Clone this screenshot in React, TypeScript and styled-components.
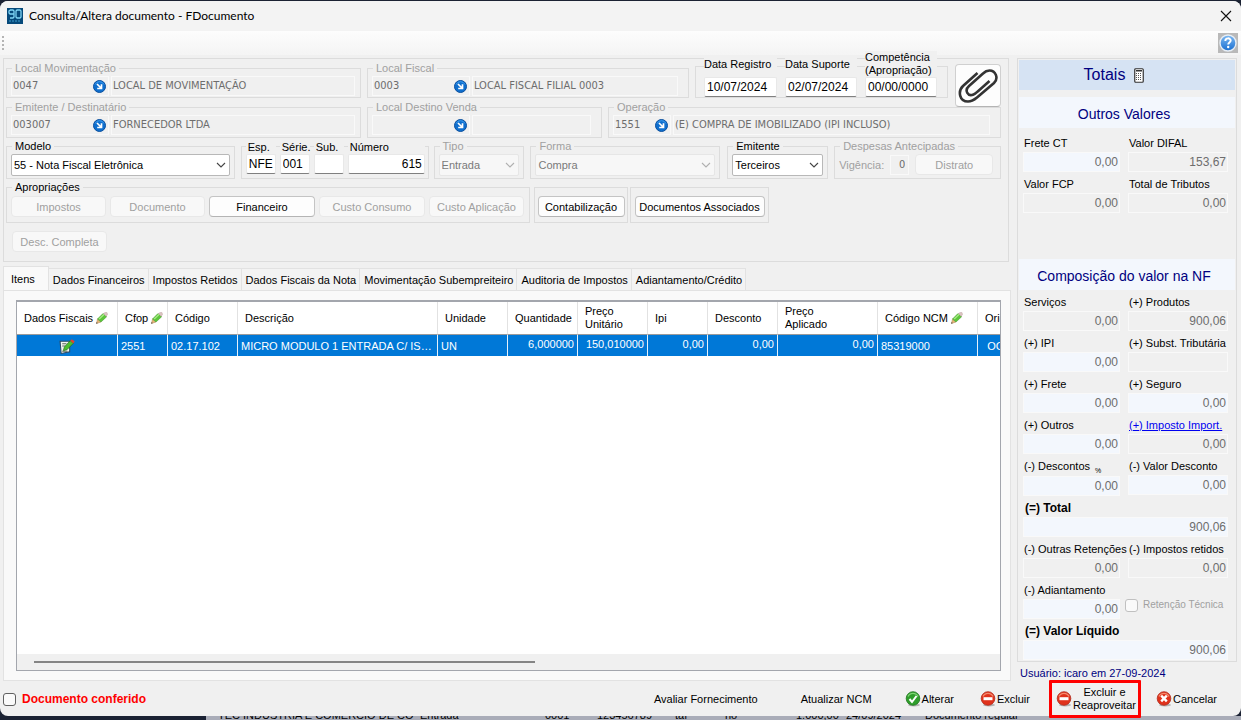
import React, { useId } from "react";
import styled, { createGlobalStyle, css } from "styled-components";

const ui = '"Liberation Sans", Arial, sans-serif';
const dataFont = '"DejaVu Sans Condensed", Tahoma, sans-serif';
const face = "#f0f0f0";
const line = "#dcdcdc";
const navy = "#000080";

const GlobalStyle = createGlobalStyle`
  *, *::before, *::after { box-sizing: border-box; }
  body { margin: 0; background: #1b2233; font-family: ${ui}; font-size: 11px; line-height: 14px; color: #000; }
  input, select, button { font: inherit; color: inherit; margin: 0; }
`;

const Desktop = styled.div`
  display: flex;
  flex-direction: column;
  min-height: 100vh;
  padding-top: 1px;
`;

const Dialog = styled.main`
  position: relative;
  z-index: 1;
  flex: 1;
  display: flex;
  flex-direction: column;
  background: ${face};
  border-radius: 8px;
`;

const TitleBar = styled.header`
  display: flex;
  align-items: center;
  gap: 6px;
  height: 30px;
  padding: 0 9px 0 7px;
  background: #f3f3f3;
  border-radius: 8px 8px 0 0;
`;

const Title = styled.h1`
  flex: 1;
  margin: 0;
  font: 400 12px/16px Lato, "Segoe UI", sans-serif;
`;

const PlainButton = styled.button`
  display: inline-flex;
  align-items: center;
  justify-content: center;
  padding: 0;
  border: 0;
  background: none;
`;

const ToolStrip = styled.div`
  display: flex;
  align-items: center;
  justify-content: space-between;
  height: 24px;
  padding: 0 3px 0 2px;
  background: linear-gradient(#fdfdfd, #f4f4f4);
`;

const HelpButton = styled(PlainButton)`
  width: 20px;
  height: 20px;
  background: #b9b9b9;
`;

const Body = styled.div`
  flex: 1;
  display: flex;
  gap: 6px;
  padding: 3px 4px 0 3px;
`;

const Work = styled.div`
  flex: 1;
  min-width: 0;
  display: flex;
  flex-direction: column;
  gap: 4px;
`;

const HeaderPanel = styled.section`
  display: flex;
  flex-direction: column;
  margin-right: 2px;
  padding: 2px 7px 9px 2px;
  border: 1px solid ${line};
`;

const FormRow = styled.div<{ $top?: number }>`
  display: flex;
  align-items: flex-end;
  margin-top: ${(p) => p.$top ?? 0}px;
`;

const ExtraRow = styled(FormRow)`
  padding-left: 6px;
`;

interface BoxProps { $w: number; $gap?: number; $grow?: boolean }

const boxSize = css<BoxProps>`
  flex: ${(p) => (p.$grow ? 1 : 0)} 1 ${(p) => p.$w}px;
  min-width: 0;
  margin: 0 ${(p) => p.$gap ?? 6}px 0 0;
  border: 1px solid ${line};
`;

const Fieldset = styled.fieldset<BoxProps & { $h: number; $muted?: boolean }>`
  ${boxSize}
  height: ${(p) => p.$h}px;
  padding: 0 4px;
  color: ${(p) => (p.$muted ? "#a0a0a0" : "#000")};
`;

const Legend = styled.legend`
  margin-left: 1px;
  padding: 0 3px;
  line-height: 14px;
`;

const Inline = styled.div<{ $gap?: number; $top?: number }>`
  display: flex;
  align-items: center;
  gap: ${(p) => p.$gap ?? 2}px;
  padding-top: ${(p) => p.$top ?? 1}px;
`;

const Group = styled.div<BoxProps & { $h: number }>`
  ${boxSize}
  display: flex;
  align-items: flex-end;
  height: ${(p) => p.$h}px;
`;

const ButtonGroup = styled(Group)`
  justify-content: center;
  padding-bottom: 5px;
`;

const Column = styled.div<{ $w: number }>`
  display: flex;
  flex-direction: column;
  width: ${(p) => p.$w}px;
`;

const ColumnLabel = styled.label`
  position: relative;
  padding-left: 2px;
  background: ${face};
  line-height: 13px;
  white-space: nowrap;
`;

const SunkenInput = styled.input<{ $right?: boolean }>`
  width: 100%;
  height: 20px;
  padding: 0 2px;
  border: 1px solid #e8e8e8;
  border-bottom-color: #808080;
  border-radius: 2px;
  background: #fff;
  font-size: 12px;
  text-align: ${(p) => (p.$right ? "right" : "left")};
`;

const FlatField = styled.div<{ $w?: number }>`
  display: flex;
  align-items: center;
  flex: ${(p) => (p.$w ? `0 0 ${p.$w}px` : "1 1 0")};
  min-width: 0;
  height: 20px;
  padding-right: 2px;
  border: 1px solid #f9f9f9;
`;

const FlatInput = styled.input<{ $right?: boolean }>`
  flex: 1;
  min-width: 0;
  width: 0;
  padding: 0 1px;
  border: 0;
  background: none;
  font: 11px/14px ${dataFont};
  color: #6d6d6d;
  text-align: ${(p) => (p.$right ? "right" : "left")};
`;

const SelectWrap = styled.div<{ $muted?: boolean }>`
  position: relative;
  flex: 1;
  color: ${(p) => (p.$muted ? "#7a7a7a" : "#000")};
  svg { position: absolute; right: 4px; top: 8px; pointer-events: none; }
`;

const Select = styled.select`
  display: block;
  width: 100%;
  height: 22px;
  padding: 0 16px 0 2px;
  border: 1px solid #b8b8b8;
  border-radius: 2px;
  background: #fff;
  appearance: none;
  &:disabled { opacity: 1; border-color: #e6e6e6; background: #f7f7f7; }
`;

const Button = styled.button<{ $w: number }>`
  flex: 0 1 ${(p) => p.$w}px;
  height: 21px;
  padding: 0;
  border: 1px solid #c4c4c4;
  border-bottom-color: #b4b4b4;
  border-radius: 4px;
  background: #fdfdfd;
  white-space: nowrap;
  &:disabled { border-color: #e8e8e8; background: #f8f8f8; color: #a0a0a0; }
`;

const ClipButton = styled.button`
  position: relative;
  align-self: flex-start;
  display: grid;
  place-items: center;
  width: 46px;
  height: 43px;
  margin: 3px 0 -9px;
  padding: 0;
  border: 1px solid #d0d0d0;
  border-bottom-color: #b4b4b4;
  border-radius: 4px;
  background: #fdfdfd;
`;

const Tabs = styled.div`
  flex: 1;
  display: flex;
  flex-direction: column;
`;

const TabList = styled.div`
  display: flex;
  align-items: flex-end;
  height: 24px;
`;

const Tab = styled.button<{ $active?: boolean }>`
  height: ${(p) => (p.$active ? 25 : 22)}px;
  margin-bottom: ${(p) => (p.$active ? -1 : 0)}px;
  padding: ${(p) => (p.$active ? "0 13px 0 7px" : "1px 3px 0 4px")};
  border: 1px solid #e2e2e2;
  border-bottom: 0;
  border-left-width: ${(p) => (p.$active ? 1 : 0)}px;
  background: ${(p) => (p.$active ? "#f9f9f9" : "#f3f3f3")};
  white-space: nowrap;
`;

const TabPanel = styled.div`
  flex: 1;
  display: flex;
  padding: 9px 9px 9px 12px;
  border: 1px solid #e2e2e2;
  background: #f9f9f9;
`;

const GridFrame = styled.div`
  flex: 1;
  width: 0;
  display: flex;
  flex-direction: column;
  border: 1px solid #a3a6ad;
  border-top-width: 2px;
  background: #fff;
`;

const GridScroll = styled.div`
  flex: 1;
  overflow: hidden;
`;

const Table = styled.table`
  width: 1060px;
  table-layout: fixed;
  border-collapse: separate;
  border-spacing: 0;
`;

const Th = styled.th`
  height: 33px;
  padding: 0 0 0 7px;
  border-right: 1px solid #e2e2e2;
  border-bottom: 1px solid #9a9a9a;
  font-weight: 400;
  line-height: 13px;
  text-align: left;
  white-space: pre-line;
  svg { vertical-align: top; margin-left: 3px; }
`;

const Td = styled.td<{ $align?: "right" | "center" }>`
  height: 21px;
  padding: ${(p) => (p.$align === "right" ? "0 3px 3px" : "1px 3px 0")};
  overflow: hidden;
  border-right: 1px solid #e6f1fb;
  background: #0078d7;
  color: #fff;
  text-align: ${(p) => p.$align ?? "left"};
  text-overflow: ellipsis;
  white-space: nowrap;
  svg { display: block; margin: 0 auto; }
`;

const ScrollTrack = styled.div`
  height: 16px;
  padding: 7px 17px;
  background: ${face};
`;

const ScrollThumb = styled.div`
  width: 52.8%;
  height: 2px;
  background: #858585;
`;

const Side = styled.aside`
  flex: 0 0 220px;
  min-width: 0;
  display: flex;
  flex-direction: column;
`;

const Totals = styled.section`
  padding: 1px;
  border: 1px solid ${line};
`;

const TotalsTitle = styled.h2`
  display: flex;
  align-items: center;
  justify-content: center;
  gap: 9px;
  height: 30px;
  margin: 0 0 7px;
  padding-right: 26px;
  background: #d6e3f3;
  font: 400 16px/20px ${ui};
  color: ${navy};
`;

const Band = styled.h3`
  height: 31px;
  margin: 0;
  padding: 2px 6px 0 0;
  background: #f3f7fd;
  font: 400 14px/31px ${ui};
  color: ${navy};
  text-align: center;
`;

const Values = styled.div<{ $top: number; $bottom?: number }>`
  display: grid;
  grid-template-columns: 97px minmax(0, 1fr);
  gap: 5px 8px;
  padding: ${(p) => p.$top}px 7px ${(p) => p.$bottom ?? 0}px 4px;
`;

const ValueCell = styled.div<{ $wide?: boolean }>`
  grid-column: ${(p) => (p.$wide ? "1 / -1" : "auto")};
  min-width: 0;
`;

const ValueLabel = styled.label<{ $bold?: boolean }>`
  display: block;
  margin-bottom: 2px;
  padding-left: ${(p) => (p.$bold ? 2 : 1)}px;
  font-size: ${(p) => (p.$bold ? 12 : 11)}px;
  font-weight: ${(p) => (p.$bold ? 700 : 400)};
  line-height: 14px;
  white-space: nowrap;
  a { color: #0000f0; }
`;

const ValueInput = styled.input<{ $blue?: boolean }>`
  display: block;
  width: 100%;
  height: 20px;
  padding: 0 1px;
  border: 1px solid #f9f9f9;
  background: ${(p) => (p.$blue ? "#f3f7fd" : face)};
  color: #6d6d6d;
  font-size: 12px;
  text-align: right;
`;

const Check = styled.input`
  appearance: none;
  flex: none;
  width: 13px;
  height: 13px;
  border: 1px solid #606060;
  border-radius: 3px;
  background: #fafafa;
  &:disabled { border-color: #c0c0c0; }
`;

const CheckLabel = styled.label`
  display: flex;
  align-items: center;
  gap: 6px;
  color: #f00;
  font-size: 12px;
  font-weight: 700;
`;

const RetentionLabel = styled.label`
  display: flex;
  align-items: center;
  gap: 5px;
  height: 14px;
  margin: 15px 0 0 -3px;
  color: #a0a0a0;
  font-size: 10px;
  white-space: nowrap;
`;

const User = styled.p`
  margin: 4px 0 1px 3px;
  color: ${navy};
`;

const Footer = styled.footer`
  display: flex;
  align-items: center;
  height: 35px;
  padding: 2px 24px 1px 3px;
`;

const Actions = styled.div`
  display: flex;
  align-items: center;
  margin-left: auto;
`;

const Action = styled(PlainButton)<{ $gap: number; $marked?: boolean }>`
  position: relative;
  gap: 1px;
  margin-left: ${(p) => p.$gap}px;
  line-height: 13px;
  white-space: pre-line;
  ${(p) => p.$marked && css`
    &::after {
      content: "";
      position: absolute;
      inset: -6px -5px -6px -7px;
      border: 3px solid #f00;
      border-radius: 1px;
    }
  `}
`;

const Backdrop = styled.div`
  display: flex;
  align-items: flex-end;
  height: 4px;
  overflow: hidden;
  margin-left: 206px;
  padding-left: 12px;
  background: #a9acb8;
  line-height: 9px;
  white-space: nowrap;
`;

const BackCell = styled.span<{ $w: number }>`
  flex: 0 0 ${(p) => p.$w}px;
`;

const AppIcon = () => (
  <svg width="16" height="16" viewBox="0 0 16 16" aria-hidden="true">
    <rect width="16" height="16" fill="#06497a" />
    <path d="M3 2h3l1 1v6l-1 1H3M7 6H3L2 5V3l1-1M10 2h3l1 1v6l-1 1h-3L9 9V3z" fill="none" stroke="#7fd4f5" strokeWidth="1.3" />
    <path d="M2 13h12" stroke="#3d9fce" strokeDasharray="2 1" />
  </svg>
);

const CloseIcon = () => (
  <svg width="12" height="12" viewBox="0 0 12 12" aria-hidden="true">
    <path d="M1 1l10 10M11 1L1 11" stroke="#111" strokeWidth="1.1" />
  </svg>
);

const Grip = () => (
  <svg width="3" height="15" viewBox="0 0 3 15" aria-hidden="true">
    {[0, 4, 8, 12].map((y) => <rect key={y} y={y} width="2" height="2" fill="#b4b4b4" />)}
  </svg>
);

const HelpIcon = () => (
  <svg width="18" height="18" viewBox="0 0 18 18" aria-hidden="true">
    <defs>
      <linearGradient id="help" x1="0" y1="0" x2="0" y2="1">
        <stop offset="0" stopColor="#7db9f3" /><stop offset="1" stopColor="#1a6fd0" />
      </linearGradient>
    </defs>
    <circle cx="9" cy="9" r="8" fill="url(#help)" stroke="#e8eef5" strokeWidth="1.4" />
    <path d="M6.3 7c0-3.600 5.400-3.400 5.400-.4 0 1.800-2.500 1.900-2.500 3.900" fill="none" stroke="#fff" strokeWidth="1.9" />
    <circle cx="9.200" cy="13" r="1.200" fill="#fff" />
  </svg>
);

const GoIcon = () => (
  <svg width="13" height="13" viewBox="0 0 13 13" aria-hidden="true">
    <circle cx="6.500" cy="6.500" r="6" fill="#0f6fce" stroke="#0a4f9e" />
    <path d="M2 4.500a5 5 0 0 1 9 0" fill="none" stroke="#3c9cf0" />
    <path d="M4 4l4 4M8.500 4.200v4.300H4.200" fill="none" stroke="#fff" strokeWidth="1.700" />
  </svg>
);

const Chevron = ({ muted }: { muted?: boolean }) => (
  <svg width="10" height="6" viewBox="0 0 10 6" aria-hidden="true">
    <path d="M1 1l4 4 4-4" fill="none" stroke={muted ? "#b0b0b0" : "#444"} strokeWidth="1.100" />
  </svg>
);

const ClipIcon = () => (
  <svg width="40" height="34" viewBox="0 0 40 34" aria-hidden="true">
    <path
      d="M19.500 4L5 17C-.5 22.500 1.500 32.500 10 32.500C13.500 32.500 16 31 19 28.500L36 14C41 9 37.500 1.500 31.500 1.500C29 1.500 27 2.500 25 4.500L11 17C6 21.500 10 28 15.500 25.500C17 25 18.500 23.500 20 22.200L31.500 12"
      fill="none" stroke="#333" strokeWidth="2.600"
    />
  </svg>
);

const Pencil = () => (
  <svg width="12" height="12" viewBox="0 0 12 12" aria-hidden="true">
    <path d="M.5 11.500L1.500 7 5 10z" fill="#e9b878" stroke="#a98357" strokeWidth=".5" />
    <path d="M1.500 7L7 1.500l3.700 3.200L5 10z" fill="#5cc63a" stroke="#4b9a34" strokeWidth=".6" />
    <path d="M3.200 7l5-4.800" stroke="#a8eb86" strokeWidth="1.200" />
    <path d="M7.500 1.500L9 .5h2l.5 1.700-1.200 2.200z" fill="#dcc3c3" stroke="#b99" strokeWidth=".4" />
    <path d="M.3 11.800l1.300-.5-.9-1.200z" fill="#333" />
  </svg>
);

const EditIcon = () => (
  <svg width="16" height="15" viewBox="1 0 15 14" aria-hidden="true">
    <path d="M2 2h9v10l-8 1.500z" fill="#f2f5ee" stroke="#2c4a63" />
    <path d="M4 4.500h4M4 6.500h3M4 11.500h5" stroke="#5c6b62" />
    <path d="M5 11l1-3.500 5.500-6L14.500 4 8.500 10z" fill="#4cbf2e" stroke="#23651a" strokeWidth=".6" />
    <path d="M11.500 1.500L13 .3 15.700 2l-1.300 2.200z" fill="#e0452f" />
  </svg>
);

const CalcIcon = () => (
  <svg width="10" height="15" viewBox="0 0 10 15" aria-hidden="true">
    <rect x=".75" y=".75" width="8.500" height="13.500" rx="1" fill="#fff" stroke="#333" strokeWidth="1.200" />
    <rect x="2" y="2" width="6" height="1.500" fill="#333" />
    {[5, 7, 9, 11].map((y) => <path key={y} d={`M2 ${y + 0.5}h6`} stroke="#555" strokeDasharray="1 1" />)}
  </svg>
);

const StatusIcon = ({ kind }: { kind: "ok" | "stop" | "cancel" }) => (
  <svg width="16" height="16" viewBox="0 0 16 16" aria-hidden="true">
    <ellipse cx="9" cy="14" rx="6" ry="1.500" fill="#00000040" />
    <circle cx="8" cy="7.500" r="6.800" fill={kind === "ok" ? "#2f9e2b" : "#e0321c"} stroke={kind === "ok" ? "#1e741d" : "#b02a1a"} strokeWidth=".8" />
    <path d="M3 5.500a5.500 5.500 0 0 1 10 0" fill="none" stroke={kind === "ok" ? "#7fd474" : "#f58b6e"} strokeWidth="1.300" />
    {kind === "ok" && <path d="M4.500 8l2.500 3 4.500-6" fill="none" stroke="#fff" strokeWidth="2" />}
    {kind === "stop" && <rect x="3.500" y="6.200" width="9" height="3" fill="#fff" />}
    {kind === "cancel" && <path d="M5.200 4.700l5.600 5.600M10.800 4.700l-5.600 5.600" stroke="#fff" strokeWidth="2.400" />}
  </svg>
);

interface LookupProps {
  title: string; code: string; name: string; w: number; h: number;
  codeW?: number; gap?: number; wideInset?: boolean; grow?: boolean;
}

const LookupLine = styled(Inline)<{ $inset?: boolean }>`
  padding-right: ${(p) => (p.$inset ? 6 : 1)}px;
`;

const Lookup = ({ title, code, name, w, h, codeW = 98, gap = 6, wideInset, grow }: LookupProps) => {
  const id = useId();
  return (
    <Fieldset $w={w} $h={h} $gap={gap} $grow={grow} $muted>
      <Legend><label htmlFor={id}>{title}</label></Legend>
      <LookupLine $inset={wideInset}>
        <FlatField $w={codeW}>
          <FlatInput id={id} defaultValue={code} readOnly />
          <PlainButton type="button" aria-label={`Abrir ${title}`}><GoIcon /></PlainButton>
        </FlatField>
        <FlatField><FlatInput aria-label={`${title}: descrição`} defaultValue={name} readOnly /></FlatField>
      </LookupLine>
    </Fieldset>
  );
};

interface PickerProps { title: string; value: string; w: number; gap?: number; muted?: boolean; grow?: boolean }

const Picker = ({ title, value, w, gap, muted, grow }: PickerProps) => {
  const id = useId();
  return (
    <Fieldset $w={w} $h={40} $gap={gap} $grow={grow} $muted={muted}>
      <Legend><label htmlFor={id}>{title}</label></Legend>
      <Inline>
        <SelectWrap $muted={muted}>
          <Select id={id} disabled={muted}><option>{value}</option></Select>
          <Chevron muted={muted} />
        </SelectWrap>
      </Inline>
    </Fieldset>
  );
};

const LabeledInput = ({ label, value, w, right }: { label: string; value: string; w: number; right?: boolean }) => {
  const id = useId();
  return (
    <Column $w={w}>
      <ColumnLabel htmlFor={id}>
        {label.split("\n").map((part, i) => <React.Fragment key={part}>{i > 0 && <br />}{part}</React.Fragment>)}
      </ColumnLabel>
      <SunkenInput id={id} defaultValue={value} $right={right} />
    </Column>
  );
};

const DateColumns = styled(Inline)`
  align-items: stretch;
  padding: 0 0 0 8px;
  ${Column} { justify-content: flex-end; }
  ${ColumnLabel} { margin: auto 0; padding: 0; }
`;

const NumberColumns = styled(Inline)`
  padding: 0 3px 4px 4px;
  ${ColumnLabel} { line-height: 14px; }
`;

interface ValueProps { label: string; value: string; blue?: boolean; wide?: boolean; link?: boolean; percent?: boolean }

const PercentMark = styled.small`
  margin-left: 5px;
  font-size: 7px;
  vertical-align: sub;
  line-height: 1;
`;

const Value = ({ label, value, blue, wide, link, percent }: ValueProps) => {
  const id = useId();
  return (
    <ValueCell $wide={wide}>
      <ValueLabel htmlFor={id} $bold={wide}>
        {link ? <a href="#imposto">{label}</a> : label}
        {percent && <PercentMark>%</PercentMark>}
      </ValueLabel>
      <ValueInput id={id} defaultValue={value} $blue={blue} readOnly />
    </ValueCell>
  );
};

interface ColumnDef { head: string; cell: React.ReactNode; w: number; align?: "right" | "center"; pencil?: boolean }

const columns: ColumnDef[] = [
  { head: "Dados Fiscais", cell: <EditIcon />, w: 101, align: "center", pencil: true },
  { head: "Cfop", cell: "2551", w: 50, pencil: true },
  { head: "Código", cell: "02.17.102", w: 70 },
  { head: "Descrição", cell: "MICRO MODULO 1 ENTRADA C/ ISOLADOR", w: 200 },
  { head: "Unidade", cell: "UN", w: 70 },
  { head: "Quantidade", cell: "6,000000", w: 70, align: "right" },
  { head: "Preço\nUnitário", cell: "150,010000", w: 70, align: "right" },
  { head: "Ipi", cell: "0,00", w: 60, align: "right" },
  { head: "Desconto", cell: "0,00", w: 70, align: "right" },
  { head: "Preço\nAplicado", cell: "0,00", w: 100, align: "right" },
  { head: "Código NCM", cell: "85319000", w: 100, pencil: true },
  { head: "Origem", cell: "OC", w: 36, align: "center" },
];

const tabs = ["Itens", "Dados Financeiros", "Impostos Retidos", "Dados Fiscais da Nota", "Movimentação Subempreiteiro", "Auditoria de Impostos", "Adiantamento/Crédito"];

const backdropCells: [string, number][] = [
  ["TEC INDUSTRIA E COMERCIO DE CO", 202], ["Entrada", 125], ["0001", 52], ["123456789", 78],
  ["taf", 50], ["no", 71], ["1.000,00", 50], ["24/09/2024", 79], ["Documento regular", 120],
];

export default function App() {
  return (
    <>
      <GlobalStyle />
      <Desktop>
        <Dialog>
          <TitleBar>
            <AppIcon />
            <Title>Consulta/Altera documento - FDocumento</Title>
            <PlainButton type="button" aria-label="Fechar"><CloseIcon /></PlainButton>
          </TitleBar>
          <ToolStrip>
            <Grip />
            <HelpButton type="button" aria-label="Ajuda"><HelpIcon /></HelpButton>
          </ToolStrip>
          <Body>
            <Work>
              <HeaderPanel>
                <FormRow>
                  <Lookup title="Local Movimentação" code="0047" name="LOCAL DE MOVIMENTAÇÃO" w={355} h={37} grow />
                  <Lookup title="Local Fiscal" code="0003" name="LOCAL FISCAL FILIAL 0003" w={322} h={37} wideInset grow />
                  <Group $w={253} $gap={7} $h={32} role="group" aria-label="Datas">
                    <DateColumns $gap={8}>
                      <LabeledInput label="Data Registro" value="10/07/2024" w={73} />
                      <LabeledInput label="Data Suporte" value="02/07/2024" w={72} />
                      <LabeledInput label={"Competência\n(Apropriação)"} value="00/00/0000" w={72} />
                    </DateColumns>
                  </Group>
                  <ClipButton type="button" aria-label="Anexos"><ClipIcon /></ClipButton>
                </FormRow>
                <FormRow $top={2}>
                  <Lookup title="Emitente / Destinatário" code="003007" name="FORNECEDOR LTDA" w={355} h={38} grow />
                  <Lookup title="Local Destino Venda" code="" name="" w={235} h={38} wideInset />
                  <Lookup title="Operação" code="1551" name="(E) COMPRA DE IMOBILIZADO (IPI INCLUSO)" w={393} h={38} codeW={58} gap={0} wideInset grow />
                </FormRow>
                <FormRow $top={1}>
                  <Picker title="Modelo" value="55 - Nota Fiscal Eletrônica" w={229} grow />
                  <Group $w={188} $gap={5} $h={33} role="group" aria-label="Número do documento">
                    <NumberColumns $gap={4}>
                      <LabeledInput label="Esp." value="NFE" w={30} />
                      <LabeledInput label="Série." value="001" w={30} />
                      <LabeledInput label="Sub." value="" w={30} />
                      <LabeledInput label="Número" value="615" w={77} right />
                    </NumberColumns>
                  </Group>
                  <Picker title="Tipo" value="Entrada" w={91} muted />
                  <Picker title="Forma" value="Compra" w={190} gap={7} muted grow />
                  <Picker title="Emitente" value="Terceiros" w={101} />
                  <Fieldset $w={167} $h={40} $gap={0} $muted>
                    <Legend>Despesas Antecipadas</Legend>
                    <Inline $gap={6}>
                      <label htmlFor="vigencia">Vigência:</label>
                      <FlatField $w={19}><FlatInput id="vigencia" defaultValue="0" readOnly $right /></FlatField>
                      <Button type="button" $w={78} disabled>Distrato</Button>
                    </Inline>
                  </Fieldset>
                </FormRow>
                <FormRow $top={1}>
                  <Fieldset $w={524} $h={43} $gap={4}>
                    <Legend>Apropriações</Legend>
                    <Inline $gap={4} $top={2}>
                      <Button type="button" $w={95} disabled>Impostos</Button>
                      <Button type="button" $w={95} disabled>Documento</Button>
                      <Button type="button" $w={106}>Financeiro</Button>
                      <Button type="button" $w={106} disabled>Custo Consumo</Button>
                      <Button type="button" $w={95} disabled>Custo Aplicação</Button>
                    </Inline>
                  </Fieldset>
                  <ButtonGroup $w={94} $gap={2} $h={36}>
                    <Button type="button" $w={87}>Contabilização</Button>
                  </ButtonGroup>
                  <ButtonGroup $w={139} $gap={0} $h={36}>
                    <Button type="button" $w={130}>Documentos Associados</Button>
                  </ButtonGroup>
                </FormRow>
                <ExtraRow $top={8}>
                  <Button type="button" $w={95} disabled>Desc. Completa</Button>
                </ExtraRow>
              </HeaderPanel>
              <Tabs>
                <TabList role="tablist">
                  {tabs.map((name, i) => (
                    <Tab key={name} type="button" role="tab" aria-selected={i === 0} $active={i === 0}>{name}</Tab>
                  ))}
                </TabList>
                <TabPanel role="tabpanel">
                  <GridFrame>
                    <GridScroll>
                      <Table>
                        <colgroup>{columns.map((c) => <col key={c.head} style={{ width: c.w }} />)}<col /></colgroup>
                        <thead>
                          <tr>{columns.map((c) => <Th key={c.head} scope="col">{c.head}{c.pencil && <Pencil />}</Th>)}</tr>
                        </thead>
                        <tbody>
                          <tr>{columns.map((c) => <Td key={c.head} $align={c.align}>{c.cell}</Td>)}</tr>
                        </tbody>
                      </Table>
                    </GridScroll>
                    <ScrollTrack><ScrollThumb /></ScrollTrack>
                  </GridFrame>
                </TabPanel>
              </Tabs>
            </Work>
            <Side>
              <Totals>
                <TotalsTitle>Totais <CalcIcon /></TotalsTitle>
                <Band>Outros Valores</Band>
                <Values $top={8} $bottom={46}>
                  <Value label="Frete CT" value="0,00" blue />
                  <Value label="Valor DIFAL" value="153,67" />
                  <Value label="Valor FCP" value="0,00" />
                  <Value label="Total de Tributos" value="0,00" />
                </Values>
                <Band>Composição do valor na NF</Band>
                <Values $top={5}>
                  <Value label="Serviços" value="0,00" />
                  <Value label="(+) Produtos" value="900,06" />
                  <Value label="(+) IPI" value="0,00" blue />
                  <Value label="(+) Subst. Tributária" value="" />
                  <Value label="(+) Frete" value="0,00" blue />
                  <Value label="(+) Seguro" value="0,00" blue />
                  <Value label="(+) Outros" value="0,00" blue />
                  <Value label="(+) Imposto Import." value="0,00" link />
                  <Value label="(-) Descontos" value="0,00" blue percent />
                  <Value label="(-) Valor Desconto" value="0,00" blue />
                  <Value label="(=) Total" value="900,06" wide blue />
                  <Value label="(-) Outras Retenções" value="0,00" />
                  <Value label="(-) Impostos retidos" value="0,00" />
                  <Value label="(-) Adiantamento" value="0,00" blue />
                  <RetentionLabel><Check type="checkbox" disabled />Retenção Técnica</RetentionLabel>
                  <Value label="(=) Valor Líquido" value="900,06" wide blue />
                </Values>
              </Totals>
              <User>Usuário: icaro em 27-09-2024</User>
            </Side>
          </Body>
          <Footer>
            <CheckLabel><Check type="checkbox" />Documento conferido</CheckLabel>
            <Actions>
              <Action type="button" $gap={0}>Avaliar Fornecimento</Action>
              <Action type="button" $gap={43}>Atualizar NCM</Action>
              <Action type="button" $gap={33}><StatusIcon kind="ok" />Alterar</Action>
              <Action type="button" $gap={26}><StatusIcon kind="stop" />Excluir</Action>
              <Action type="button" $gap={26} $marked><StatusIcon kind="stop" />{"Excluir e\nReaproveitar"}</Action>
              <Action type="button" $gap={20}><StatusIcon kind="cancel" />Cancelar</Action>
            </Actions>
          </Footer>
        </Dialog>
        <Backdrop aria-hidden="true">
          {backdropCells.map(([text, w]) => <BackCell key={text} $w={w}>{text}</BackCell>)}
        </Backdrop>
      </Desktop>
    </>
  );
}
